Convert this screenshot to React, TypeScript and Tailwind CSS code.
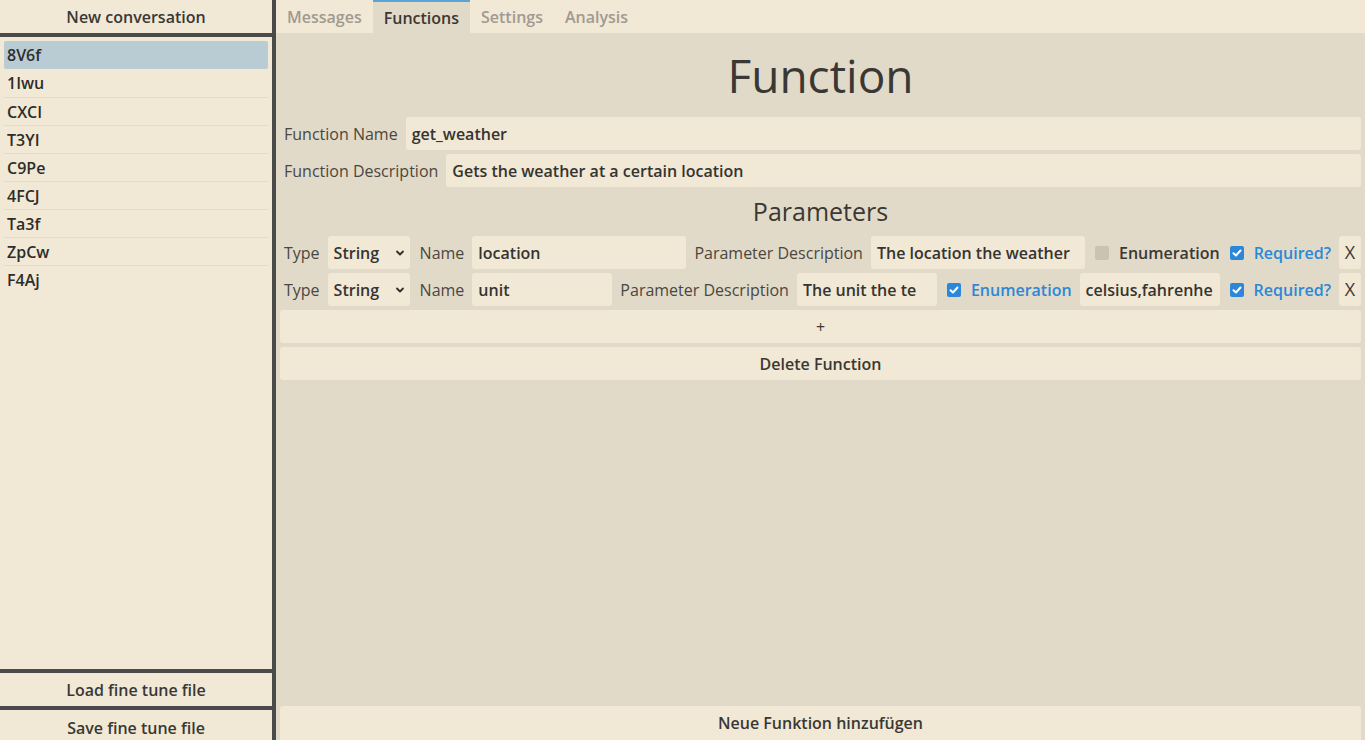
import { ReactNode } from 'react';

const conversations = ['8V6f', '1Iwu', 'CXCI', 'T3YI', 'C9Pe', '4FCJ', 'Ta3f', 'ZpCw', 'F4Aj'];

function Check({ checked }: { checked: boolean }) {
  return checked ? (
    <span className="w-[14px] h-[14px] rounded-[2px] bg-[#2b88d8] flex items-center justify-center shrink-0">
      <svg viewBox="0 0 14 14" className="w-[14px] h-[14px]" fill="none" stroke="white" strokeWidth="2" strokeLinecap="round" strokeLinejoin="round">
        <path d="M3.5 7.2 6 9.5 10.5 4.5" />
      </svg>
    </span>
  ) : (
    <span className="w-[14px] h-[14px] rounded-[2px] bg-[#cac2b2] shrink-0" />
  );
}

function Field({ value, className = '' }: { value: string; className?: string }) {
  return (
    <div className={`h-[33px] bg-[#f1e8d6] rounded-[3px] px-[6px] flex items-center text-[#353430] font-semibold overflow-hidden whitespace-nowrap ${className}`}>
      {value}
    </div>
  );
}

function Label({ children }: { children: ReactNode }) {
  return <span className="text-[#4a4741] whitespace-nowrap shrink-0">{children}</span>;
}

function Select() {
  return (
    <div className="h-[33px] w-[82px] bg-[#f1e8d6] rounded-[3px] pl-[6px] pr-[5px] flex items-center justify-between text-[#353430] font-semibold shrink-0">
      String
      <svg viewBox="0 0 10 10" className="w-[10px] h-[10px]" fill="none" stroke="#2f2e2b" strokeWidth="1.8" strokeLinecap="round" strokeLinejoin="round">
        <path d="M2 3.5 5 6.5 8 3.5" />
      </svg>
    </div>
  );
}

function ParamRow({ name, desc, enumOn, enumValue }: { name: string; desc: string; enumOn: boolean; enumValue?: string }) {
  return (
    <div className="flex items-center gap-[8px] pl-[4px] h-[33px]">
      <Label>Type</Label>
      <Select />
      <span className="ml-[2px]"><Label>Name</Label></span>
      <Field value={name} className="flex-1 min-w-0" />
      <Label>Parameter Description</Label>
      <Field value={desc} className="flex-1 min-w-0" />
      <span className="flex items-center gap-[10px] ml-[2px] shrink-0 font-semibold">
        <Check checked={enumOn} />
        <span className={enumOn ? 'text-[#2b88d8]' : 'text-[#3a3834]'}>Enumeration</span>
      </span>
      {enumValue !== undefined && <Field value={enumValue} className="flex-1 min-w-0" />}
      <span className="flex items-center gap-[10px] ml-[2px] shrink-0 font-semibold">
        <Check checked />
        <span className="text-[#2b88d8]">Required?</span>
      </span>
      <div className="h-[33px] w-[22px] bg-[#f1e8d6] rounded-[3px] flex items-center justify-center text-[18px] text-[#3a3834] shrink-0">X</div>
    </div>
  );
}

function SideButton({ children, className = 'h-[33px]' }: { children: ReactNode; className?: string }) {
  return (
    <button className={`w-full bg-[#f1e8d6] text-[#3a3834] font-semibold shrink-0 ${className}`}>{children}</button>
  );
}

export default function App() {
  return (
    <div className="h-screen w-full flex overflow-hidden bg-[#e2dac8] text-[16px]" style={{ fontFamily: '"Open Sans", "Noto Sans", sans-serif' }}>
      {/* Sidebar */}
      <aside className="w-[276px] shrink-0 flex flex-col bg-[#4a4a4a] pr-[4px] gap-[4px]">
        <SideButton>New conversation</SideButton>
        <div className="flex-1 bg-[#f1e8d6] px-[4px] pt-[4px]">
          {conversations.map((c, i) => (
            <div
              key={c}
              className={`h-[28px] flex items-center px-[3px] font-semibold text-[#2e2d2a] ${
                i === 0 ? 'bg-[#b9ccd4] rounded-[2px]' : 'border-t border-[#e3dbcb]'
              } ${i === 1 ? 'border-t-0' : ''}`}
            >
              {c}
            </div>
          ))}
        </div>
        <SideButton>Load fine tune file</SideButton>
        <SideButton className="h-[30px] items-start pt-[6px] flex justify-center">Save fine tune file</SideButton>
      </aside>

      {/* Main */}
      <main className="flex-1 flex flex-col min-w-0">
        <nav className="h-[33px] bg-[#f1e8d6] flex shrink-0 font-semibold">
          <div className="px-[11px] flex items-center text-[#a09a90]">Messages</div>
          <div className="px-[11px] flex items-center bg-[#e2dac8] border-t-2 border-[#5aa3d6] text-[#3a3834]">Functions</div>
          <div className="px-[11px] flex items-center text-[#a09a90]">Settings</div>
          <div className="px-[11px] flex items-center text-[#a09a90]">Analysis</div>
        </nav>

        <div className="flex-1 flex flex-col px-[4px] pt-[10px] pb-0 gap-[4px]">
          <h1 className="text-[46px] leading-[64px] text-center text-[#3a3834] mb-[6px]">Function</h1>

          <div className="flex items-center gap-[8px] pl-[4px]">
            <Label>Function Name</Label>
            <Field value="get_weather" className="flex-1 h-[32px]" />
          </div>
          <div className="flex items-center gap-[8px] pl-[4px]">
            <Label>Function Description</Label>
            <Field value="Gets the weather at a certain location" className="flex-1 h-[32px]" />
          </div>

          <h2 className="text-[25px] leading-[44px] text-center text-[#3a3834] -mt-[2px] -mb-[1px]">Parameters</h2>

          <ParamRow name="location" desc="The location the weather" enumOn={false} />
          <ParamRow name="unit" desc="The unit the te" enumOn enumValue="celsius,fahrenhe" />

          <button className="h-[33px] bg-[#f1e8d6] rounded-[3px] text-[#3a3834]">+</button>
          <button className="h-[33px] bg-[#f1e8d6] rounded-[3px] text-[#3a3834] font-semibold">Delete Function</button>

          <div className="flex-1" />
          <button className="h-[34px] bg-[#f1e8d6] rounded-t-[3px] text-[#3a3834] font-semibold">Neue Funktion hinzufügen</button>
        </div>
      </main>
    </div>
  );
}
